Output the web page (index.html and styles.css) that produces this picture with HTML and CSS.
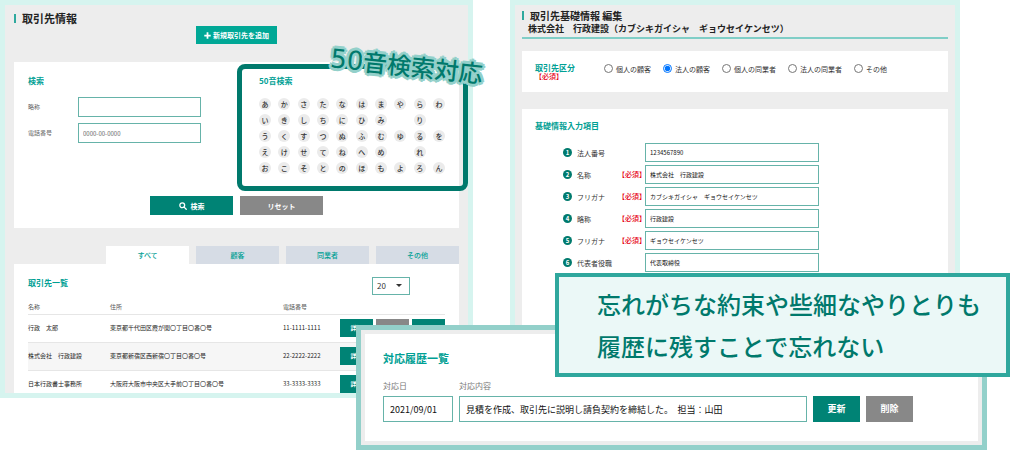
FILE: index.html
```html
<!DOCTYPE html>
<html lang="ja">
<head>
<meta charset="utf-8">
<title>取引先情報</title>
<link rel="stylesheet" href="styles.css">
</head>
<body>
<main class="stage">
  <section class="panel panel-clients">
    <h1 class="page-title">取引先情報</h1>
    <button class="btn btn-add" type="button">
      <svg class="icon-plus" viewBox="0 0 12 12" aria-hidden="true"><path d="M4.5 0.5h3v4h4v3h-4v4h-3v-4h-4v-3h4z"/></svg>新規取引先を追加
    </button>

    <form class="card search-card">
      <div class="search-grid">
        <div>
          <h2 class="heading">検索</h2>
          <div class="fields">
            <label for="short-name">略称</label>
            <input class="input" id="short-name" type="text">
            <label for="phone">電話番号</label>
            <input class="input" id="phone" type="text" placeholder="0000-00-0000">
          </div>
        </div>
        <div class="kana">
          <h2 class="heading">50音検索</h2>
          <div class="kana-grid">
            <button type="button">あ</button><button type="button">か</button><button type="button">さ</button><button type="button">た</button><button type="button">な</button><button type="button">は</button><button type="button">ま</button><button type="button">や</button><button type="button">ら</button><button type="button">わ</button>
            <button type="button">い</button><button type="button">き</button><button type="button">し</button><button type="button">ち</button><button type="button">に</button><button type="button">ひ</button><button type="button">み</button><span></span><button type="button">り</button><span></span>
            <button type="button">う</button><button type="button">く</button><button type="button">す</button><button type="button">つ</button><button type="button">ぬ</button><button type="button">ふ</button><button type="button">む</button><button type="button">ゆ</button><button type="button">る</button><button type="button">を</button>
            <button type="button">え</button><button type="button">け</button><button type="button">せ</button><button type="button">て</button><button type="button">ね</button><button type="button">へ</button><button type="button">め</button><span></span><button type="button">れ</button><span></span>
            <button type="button">お</button><button type="button">こ</button><button type="button">そ</button><button type="button">と</button><button type="button">の</button><button type="button">ほ</button><button type="button">も</button><button type="button">よ</button><button type="button">ろ</button><button type="button">ん</button>
          </div>
          <div class="kana-frame"></div>
          <p class="kana-label"><span class="digits">50</span>音検索対応</p>
        </div>
      </div>
      <div class="search-actions">
        <button class="btn btn-wide btn-green" type="button">
          <svg class="icon-search" viewBox="0 0 16 16" aria-hidden="true"><circle cx="6.5" cy="6.5" r="4.8"/><path d="M10.2 10.2L14.5 14.5"/></svg>検索
        </button>
        <button class="btn btn-wide btn-gray" type="reset">リセット</button>
      </div>
    </form>

    <nav class="tabs">
      <button class="tab tab-active" type="button">すべて</button>
      <button class="tab" type="button">顧客</button>
      <button class="tab" type="button">同業者</button>
      <button class="tab" type="button">その他</button>
    </nav>

    <section class="card list-card">
      <div class="list-head">
        <h2 class="heading">取引先一覧</h2>
        <div class="select-wrap">
          <select aria-label="表示件数"><option>20</option><option>50</option></select>
        </div>
      </div>
      <table class="clients">
        <thead>
          <tr><th class="col-name">名称</th><th class="col-address">住所</th><th class="col-phone">電話番号</th><th></th></tr>
        </thead>
        <tbody>
          <tr>
            <td>行政　太郎</td><td>東京都千代田区霞が関〇丁目〇番〇号</td><td>11-1111-1111</td>
            <td><div class="row-actions"><button class="btn btn-green" type="button">詳細</button><button class="btn btn-gray" type="button" aria-label="削除"></button><button class="btn btn-green" type="button" aria-label="編集"></button></div></td>
          </tr>
          <tr>
            <td>株式会社　行政建設</td><td>東京都新宿区西新宿〇丁目〇番〇号</td><td>22-2222-2222</td>
            <td><div class="row-actions"><button class="btn btn-green" type="button">詳細</button><button class="btn btn-gray" type="button" aria-label="削除"></button><button class="btn btn-green" type="button" aria-label="編集"></button></div></td>
          </tr>
          <tr>
            <td>日本行政書士事務所</td><td>大阪府大阪市中央区大手前〇丁目〇番〇号</td><td>33-3333-3333</td>
            <td><div class="row-actions"><button class="btn btn-green" type="button">詳細</button><button class="btn btn-gray" type="button" aria-label="削除"></button><button class="btn btn-green" type="button" aria-label="編集"></button></div></td>
          </tr>
        </tbody>
      </table>
    </section>
  </section>

  <section class="panel panel-edit">
    <header class="edit-header">
      <h1 class="page-title page-title-small">取引先基礎情報 編集</h1>
      <p class="subtitle">株式会社　行政建設（カブシキガイシャ　ギョウセイケンセツ）</p>
    </header>

    <fieldset class="card type-card">
      <div class="type-title"><h2 class="heading">取引先区分</h2><span class="required">【必須】</span></div>
      <div class="radios">
        <label><input type="radio" name="type">個人の顧客</label>
        <label><input type="radio" name="type" checked>法人の顧客</label>
        <label><input type="radio" name="type">個人の同業者</label>
        <label><input type="radio" name="type">法人の同業者</label>
        <label><input type="radio" name="type">その他</label>
      </div>
    </fieldset>

    <section class="card info-card">
      <h2 class="heading">基礎情報入力項目</h2>
      <div class="info-grid">
        <span class="num">1</span><label for="f1">法人番号</label><span></span><input class="input" id="f1" type="text" value="1234567890">
        <span class="num">2</span><label for="f2">名称</label><span class="required">【必須】</span><input class="input" id="f2" type="text" value="株式会社　行政建設">
        <span class="num">3</span><label for="f3">フリガナ</label><span class="required">【必須】</span><input class="input" id="f3" type="text" value="カブシキガイシャ　ギョウセイケンセツ">
        <span class="num">4</span><label for="f4">略称</label><span class="required">【必須】</span><input class="input" id="f4" type="text" value="行政建設">
        <span class="num">5</span><label for="f5">フリガナ</label><span class="required">【必須】</span><input class="input" id="f5" type="text" value="ギョウセイケンセツ">
        <span class="num">6</span><label for="f6">代表者役職</label><span></span><input class="input" id="f6" type="text" value="代表取締役">
      </div>
    </section>
  </section>

  <section class="history">
    <div class="history-card">
      <h2 class="history-title">対応履歴一覧</h2>
      <div class="history-row">
        <div class="history-date"><label for="h-date">対応日</label><input class="input" id="h-date" type="text" value="2021/09/01"></div>
        <div class="history-note"><label for="h-note">対応内容</label><input class="input" id="h-note" type="text" value="見積を作成、取引先に説明し請負契約を締結した。　担当：山田"></div>
        <button class="btn btn-green" type="button">更新</button>
        <button class="btn btn-gray" type="button">削除</button>
      </div>
    </div>
  </section>

  <p class="callout">忘れがちな約束や些細なやりとりも<br>履歴に残すことで忘れない</p>
</main>
</body>
</html>
```

FILE: styles.css
```css
* {
  box-sizing: border-box;
}

body {
  margin: 0;
  background: #fff;
  color: #333;
  font-family: "Noto Sans CJK JP", "Noto Sans", sans-serif;
  font-size: 7px;
  line-height: 10px;
}

h1, h2, p {
  margin: 0;
}

button, input, select {
  margin: 0;
  font: inherit;
  color: inherit;
}

.stage {
  position: relative;
  display: grid;
  grid-template-columns: 473fr 450fr;
  column-gap: 37px;
  min-height: 450px;
  padding-right: 50px;
  align-content: start;
}

.panel {
  border: 5px solid #d6f4ef;
  background: #ededed;
}

.panel-clients {
  padding: 5px 9px 0;
}

.panel-edit {
  display: flex;
  flex-direction: column;
  padding: 4px 7px 0;
}

.card {
  background: #fff;
}

.page-title {
  display: flex;
  align-items: center;
  gap: 6px;
  color: #222;
  font-size: 11px;
  font-weight: 700;
  line-height: 16px;
}

.page-title::before {
  content: "";
  width: 2px;
  height: 9px;
  background: #2fa99e;
}

.page-title-small {
  font-size: 10px;
  line-height: 13px;
}

.heading {
  color: #00a094;
  font-size: 8px;
  font-weight: 700;
  line-height: 12px;
}

.input {
  width: 100%;
  min-width: 0;
  padding: 0 4px;
  border: 1px solid #66b3a9;
  border-radius: 0;
  background: #fff;
}

.btn {
  display: flex;
  align-items: center;
  justify-content: center;
  padding: 0;
  border: 0;
  color: #fff;
  font-weight: 700;
}

.btn-green {
  background: #008375;
}

.btn-gray {
  background: #888;
}

.btn-add {
  gap: 2px;
  height: 18px;
  margin: 0 auto 18px;
  padding: 0 8px;
  background: #00a896;
}

.icon-plus {
  width: 7px;
  height: 7px;
  fill: #fff;
}

.icon-search {
  width: 8px;
  height: 8px;
  fill: none;
  stroke: #fff;
  stroke-width: 2.6;
  stroke-linecap: round;
}

/* Search form */
.search-card {
  padding: 13px 14px;
}

.search-grid {
  display: grid;
  grid-template-columns: 173fr 186fr;
  column-gap: 58px;
}

.fields {
  display: grid;
  grid-template-columns: 50px 1fr;
  row-gap: 6px;
  align-items: center;
  margin-top: 10px;
  color: #666;
  font-size: 6px;
}

.fields .input {
  height: 20px;
}

.fields .input::placeholder {
  color: #666;
}

.kana {
  position: relative;
}

.kana-grid {
  display: grid;
  grid-template-columns: repeat(10, 12px);
  justify-content: space-between;
  row-gap: 4px;
  margin-top: 11px;
}

.kana-grid button {
  height: 12px;
  padding: 0;
  border: 0;
  border-radius: 50%;
  background: #ebebeb;
  font-weight: 500;
}

.kana-frame {
  position: absolute;
  inset: -11px -23px -17px -22px;
  border: 5px solid #00796c;
  border-radius: 8px;
  pointer-events: none;
}

.kana-label {
  position: absolute;
  top: -28px;
  left: 71px;
  color: #00796c;
  font-size: 24px;
  font-weight: 500;
  line-height: 36px;
  white-space: nowrap;
  transform: rotate(6deg);
  -webkit-text-stroke: 4px #fff;
  paint-order: stroke fill;
  text-shadow: 3px 0 #93d0ca, -3px 0 #93d0ca, 0 3px #93d0ca, 0 -3px #93d0ca,
    2px 2px #93d0ca, -2px 2px #93d0ca, 2px -2px #93d0ca, -2px -2px #93d0ca;
}

.kana-label .digits {
  font-family: "DejaVu Sans", sans-serif;
  font-size: 26px;
  font-weight: 400;
}

.search-actions {
  display: flex;
  justify-content: center;
  gap: 7px;
  margin-top: 22px;
}

.btn-wide {
  gap: 4px;
  width: 83px;
  height: 19px;
}

/* Tabs and client list */
.tabs {
  display: flex;
  justify-content: flex-end;
  gap: 7px;
  margin-top: 18px;
}

.tab {
  width: 83px;
  height: 18px;
  padding: 0;
  border: 0;
  background: #d6dce5;
  color: #00a094;
  font-weight: 500;
}

.tab-active {
  background: #fff;
}

.list-card {
  padding: 13px 14px 0;
}

.list-head {
  display: flex;
  justify-content: space-between;
  padding-right: 35px;
}

.select-wrap {
  position: relative;
}

.select-wrap::after {
  content: "";
  position: absolute;
  top: 7px;
  right: 8px;
  border: 3px solid transparent;
  border-top-color: #333;
  border-bottom: 0;
  pointer-events: none;
}

.select-wrap select {
  display: block;
  width: 38px;
  height: 18px;
  padding: 0 4px;
  border: 1px solid #66b3a9;
  border-radius: 0;
  background: #fff;
  font-size: 8px;
  appearance: none;
}

.clients {
  width: 100%;
  margin-top: 5px;
  border-spacing: 0;
  table-layout: fixed;
  font-size: 6px;
}

.clients th {
  height: 15px;
  padding: 0;
  border-bottom: 1px solid #e6e6e6;
  color: #555;
  font-weight: 400;
  text-align: left;
}

.clients td {
  padding: 4px 0 5px;
  border-bottom: 1px solid #e6e6e6;
  color: #222;
  white-space: nowrap;
}

.clients tr:nth-child(even) td {
  background: #f6f6f6;
}

.clients tr:last-child td {
  padding-bottom: 0;
  border-bottom: 0;
}

.col-name {
  width: 82px;
}

.col-address {
  width: 173px;
}

.col-phone {
  width: 57px;
}

.row-actions {
  display: grid;
  grid-template-columns: repeat(3, 1fr);
  gap: 3px;
}

.row-actions .btn {
  height: 18px;
}

/* Client editing */
.edit-header {
  margin-bottom: 12px;
  padding-bottom: 2px;
  border-bottom: 2px solid #80cec7;
}

.subtitle {
  padding-left: 6px;
  color: #222;
  font-size: 9px;
  font-weight: 700;
  line-height: 13px;
  white-space: nowrap;
}

.required {
  color: #e60012;
  font-weight: 500;
  line-height: 7px;
}

.type-card {
  display: flex;
  margin: 0 0 17px;
  padding: 12px 13px;
  border: 0;
}

.type-title {
  display: flex;
  flex-direction: column;
  width: 69px;
}

.type-title .heading,
.info-card .heading {
  line-height: 10px;
}

.radios {
  display: flex;
  gap: 12px;
  white-space: nowrap;
}

.radios label {
  display: flex;
  align-items: center;
  gap: 3px;
  height: 11px;
}

.radios input {
  width: 9px;
  height: 9px;
}

.info-card {
  flex: 1;
  padding: 12px 13px;
}

.info-grid {
  display: grid;
  grid-template-columns: 9px 46px 27px 1fr;
  row-gap: 3px;
  align-items: center;
  margin-top: 12px;
  padding: 0 116px 0 28px;
}

.info-grid label {
  padding-left: 5px;
  white-space: nowrap;
}

.info-grid .input {
  height: 19px;
  font-size: 6px;
  color: #111;
}

.num {
  height: 9px;
  border-radius: 50%;
  background: #007a6d;
  color: #fff;
  font-size: 6px;
  font-weight: 700;
  line-height: 9px;
  text-align: center;
}

/* History window lying over both panels */
.history {
  position: absolute;
  top: 325px;
  right: 23px;
  left: 356px;
  padding: 4px;
  border: 5px solid #93d0ca;
  background: #ededed;
}

.history-card {
  padding: 16px 65px 19px 18px;
  background: #fff;
}

.history-title {
  color: #00a094;
  font-size: 11px;
  font-weight: 700;
  line-height: 16px;
}

.history-row {
  display: flex;
  align-items: flex-end;
  gap: 6px;
  margin-top: 15px;
  font-size: 9px;
}

.history-row label {
  display: block;
  margin-bottom: 5px;
  color: #777;
  font-size: 8px;
  line-height: 10px;
}

.history-row .input {
  display: block;
  height: 26px;
  padding: 0 6px;
  color: #111;
}

.history-date {
  width: 70px;
}

.history-note {
  flex: 1;
}

.history-row .btn {
  width: 47px;
  height: 26px;
}

.callout {
  position: absolute;
  top: 273px;
  right: 0;
  left: 555px;
  padding: 6px 0 6px 38px;
  border: 4px solid #2fa79d;
  background: #ebf8f7;
  color: #00796c;
  font-size: 24px;
  font-weight: 500;
  line-height: 42px;
  white-space: nowrap;
}
```
